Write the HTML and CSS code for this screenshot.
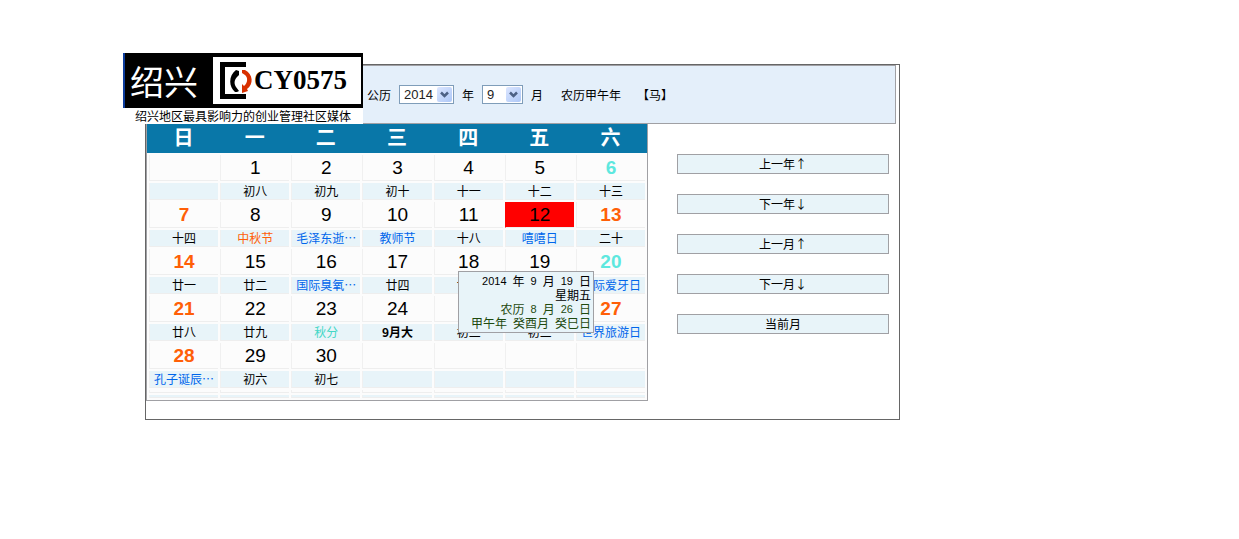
FILE: index.html
```html
<!DOCTYPE html>
<html lang="zh-CN">
<head>
    <meta charset="UTF-8">
    <meta name="viewport" content="width=device-width, initial-scale=1.0">
    <title>万年历</title>
    <link rel="stylesheet" href="styles.css">
</head>
<body>

<div class="container">
    <div class="logo">
        <div class="logo-banner">
            <span class="logo-city">绍兴</span>
            <span class="logo-site">
                <svg class="logo-icon" width="27" height="37" viewBox="0 0 27 37">
                    <path d="M26 0H0V37H26V32H5V5H26Z" fill="#000"/>
                    <path d="M16 8L19 9V13L17 15C14 18 14 22 16 25L19 29L17 30H15C9 25 8 14 16 8Z" fill="#000"/>
                    <path d="M22 8H25C33 12 34 22 27 27L28 29L22 31V22L24 24C28 21 28 15 25 13L22 11Z" fill="#d83000"/>
                </svg>
                CY0575
            </span>
        </div>
        <div class="logo-text">绍兴地区最具影响力的创业管理社区媒体</div>
    </div>

    <div class="header">
        <label for="year">公历</label>
        <span class="select-box year">
            <select id="year"><option>2014</option></select>
            <svg class="arrow" width="15" height="15" viewBox="0 0 15 15"><path d="M4 5.5L7.500 9L11 5.5" fill="none" stroke="#4d6185" stroke-width="2.500"/></svg>
        </span>
        <label for="year">年</label>
        <span class="select-box month">
            <select id="month"><option>9</option></select>
            <svg class="arrow" width="15" height="15" viewBox="0 0 15 15"><path d="M4 5.5L7.500 9L11 5.5" fill="none" stroke="#4d6185" stroke-width="2.500"/></svg>
        </span>
        <label for="month">月</label>
        <span class="lunar-year">农历甲午年</span>
        <span class="zodiac">【马】</span>
    </div>

    <div class="main">
        <div class="calendar-box">
            <table class="calendar">
                <thead>
                    <tr><th>日</th><th>一</th><th>二</th><th>三</th><th>四</th><th>五</th><th>六</th></tr>
                </thead>
                <tbody>
                    <tr class="day"><td></td><td>1</td><td>2</td><td>3</td><td>4</td><td>5</td><td class="sat">6</td></tr>
                    <tr class="lunar"><td></td><td>初八</td><td>初九</td><td>初十</td><td>十一</td><td>十二</td><td>十三</td></tr>

                    <tr class="day"><td class="sun">7</td><td>8</td><td>9</td><td>10</td><td>11</td><td class="today">12</td><td class="sun">13</td></tr>
                    <tr class="lunar"><td>十四</td><td class="festival">中秋节</td><td class="holiday">毛泽东逝…</td><td class="holiday">教师节</td><td>十八</td><td class="holiday">嘻嘻日</td><td>二十</td></tr>

                    <tr class="day"><td class="sun">14</td><td>15</td><td>16</td><td>17</td><td>18</td><td>19</td><td class="sat">20</td></tr>
                    <tr class="lunar"><td>廿一</td><td>廿二</td><td class="holiday">国际臭氧…</td><td>廿四</td><td>廿五</td><td>廿六</td><td class="holiday">国际爱牙日</td></tr>

                    <tr class="day"><td class="sun">21</td><td>22</td><td>23</td><td>24</td><td>25</td><td>26</td><td class="sun">27</td></tr>
                    <tr class="lunar"><td>廿八</td><td>廿九</td><td class="term">秋分</td><td class="first">9月大</td><td>初二</td><td>初三</td><td class="holiday">世界旅游日</td></tr>

                    <tr class="day"><td class="sun">28</td><td>29</td><td>30</td><td></td><td></td><td></td><td></td></tr>
                    <tr class="lunar"><td class="holiday">孔子诞辰…</td><td>初六</td><td>初七</td><td></td><td></td><td></td><td></td></tr>

                    <tr class="day empty"><td></td><td></td><td></td><td></td><td></td><td></td><td></td></tr>
                    <tr class="lunar empty"><td></td><td></td><td></td><td></td><td></td><td></td><td></td></tr>
                </tbody>
            </table>

            <div class="tooltip">
                <div class="line"><span class="num">2014</span><span>年</span><span class="num">9</span><span>月</span><span class="num">19</span><span>日</span></div>
                <div class="line"><span>星期五</span></div>
                <div class="line green"><span>农历</span><span class="num">8</span><span>月</span><span class="num">26</span><span>日</span></div>
                <div class="line green"><span>甲午年</span><span>癸酉月</span><span>癸巳日</span></div>
            </div>
        </div>

        <div class="buttons">
            <button type="button">上一年↑</button>
            <button type="button">下一年↓</button>
            <button type="button">上一月↑</button>
            <button type="button">下一月↓</button>
            <button type="button">当前月</button>
        </div>
    </div>
</div>

</body>
</html>
```
FILE: styles.css
```css
body {
    margin: 0;
    padding: 64px 0 0 145px;
    font-family: "Noto Sans CJK SC", sans-serif;
    font-size: 12px;
    color: #000;
    background: #fff;
}
.container {
    position: relative;
    max-width: 753px;
    padding-bottom: 18px;
    border: 1px solid #666;
}

/* logo hangs over the top left corner */
.logo {
    position: absolute;
    left: -23px;
    top: -12px;
    width: 240px;
    background: #fff;
}
.logo-banner {
    display: flex;
    justify-content: space-between;
    box-sizing: border-box;
    height: 55px;
    padding: 4px 2px 4px 5px;
    background: #000;
    border-left: 2px solid #0c3c9c;
}
.logo-city {
    color: #fff;
    font-size: 34px;
    line-height: 47px;
}
.logo-site {
    display: flex;
    align-items: center;
    gap: 7px;
    box-sizing: border-box;
    width: 148px;
    padding-left: 7px;
    background: #fff;
    font-family: "Liberation Serif", serif;
    font-size: 27px;
    font-weight: bold;
}
.logo-icon {
    flex: none;
    overflow: visible;
}
.logo-text {
    line-height: 16px;
    text-align: center;
}

.header {
    display: flex;
    align-items: center;
    gap: 8px;
    height: 57px;
    margin-right: 3px;
    padding-left: 220px;
    background: #e4effa;
    border: 1px solid #a0a0a4;
}
.select-box {
    position: relative;
    height: 19px;
}
.select-box select {
    appearance: none;
    display: block;
    box-sizing: border-box;
    width: 100%;
    height: 19px;
    margin: 0;
    padding: 0 4px;
    border: 1px solid #7f9db9;
    border-radius: 0;
    background: #fff;
    color: #222;
    font-family: "Liberation Sans", sans-serif;
    font-size: 13px;
}
.year {
    width: 55px;
}
.month {
    width: 41px;
}
.arrow {
    position: absolute;
    top: 2px;
    right: 2px;
    border-radius: 2px;
    background: linear-gradient(135deg, #dce6ff, #aec8f7);
    pointer-events: none;
}
.lunar-year {
    margin-left: 10px;
}
.zodiac {
    margin-left: 8px;
}

.main {
    display: flex;
}
.calendar-box {
    position: relative;
    flex: 0 1 502px;
}
.calendar {
    width: 100%;
    table-layout: fixed;
    border-collapse: separate;
    border-spacing: 2px;
    border: 1px solid #a0a0a4;
    border-top: none;
    background: linear-gradient(#0977a8 29px, #fcfcfc 29px);
}
.calendar th {
    padding: 0;
    height: 27px;
    color: #fff;
    font-size: 20px;
    line-height: 22px;
    vertical-align: top;
}
.calendar td {
    padding: 0;
    border-left: 1px solid #f0f0f0;
    border-bottom: 1px solid #eee;
    text-align: center;
    white-space: nowrap;
}
.day td {
    height: 25px;
    font-family: "Liberation Sans", sans-serif;
    font-size: 19px;
    line-height: 25px;
}
.lunar td {
    height: 16px;
    background: #e8f4f9;
    line-height: 16px;
}
.calendar .empty td {
    height: 2px;
}
.day .sun {
    color: #ff5f07;
    font-weight: bold;
}
.day .sat {
    color: #5ee8df;
    font-weight: bold;
}
.day .today {
    background: #f00;
    border-left-color: #f00;
}
.lunar .festival {
    color: #ff5f07;
}
.lunar .holiday {
    color: #0066eb;
}
.lunar .term {
    color: #44d7c7;
}
.lunar .first {
    font-weight: bold;
}

.tooltip {
    position: absolute;
    left: 312px;
    top: 147px;
    box-sizing: border-box;
    width: 136px;
    padding: 2px;
    border: 1px solid #a0a0a4;
    background: #e8f4f9;
}
.line {
    display: flex;
    justify-content: flex-end;
    gap: 6px;
    height: 14px;
    line-height: 14px;
}
.num {
    font-family: "Liberation Sans", sans-serif;
    font-size: 11px;
}
.green {
    color: #1f4a0f;
}

.buttons {
    flex: 1;
    display: flex;
    flex-direction: column;
    gap: 20px;
    padding: 30px 10px 0 29px;
}
.buttons button {
    height: 20px;
    padding: 0;
    border: 1px solid #a0a0a4;
    background: #e8f4f9;
    color: #000;
    font-family: inherit;
    font-size: 12px;
    line-height: 18px;
    cursor: pointer;
}
.buttons button:hover {
    background: #d5eaf3;
}
```
